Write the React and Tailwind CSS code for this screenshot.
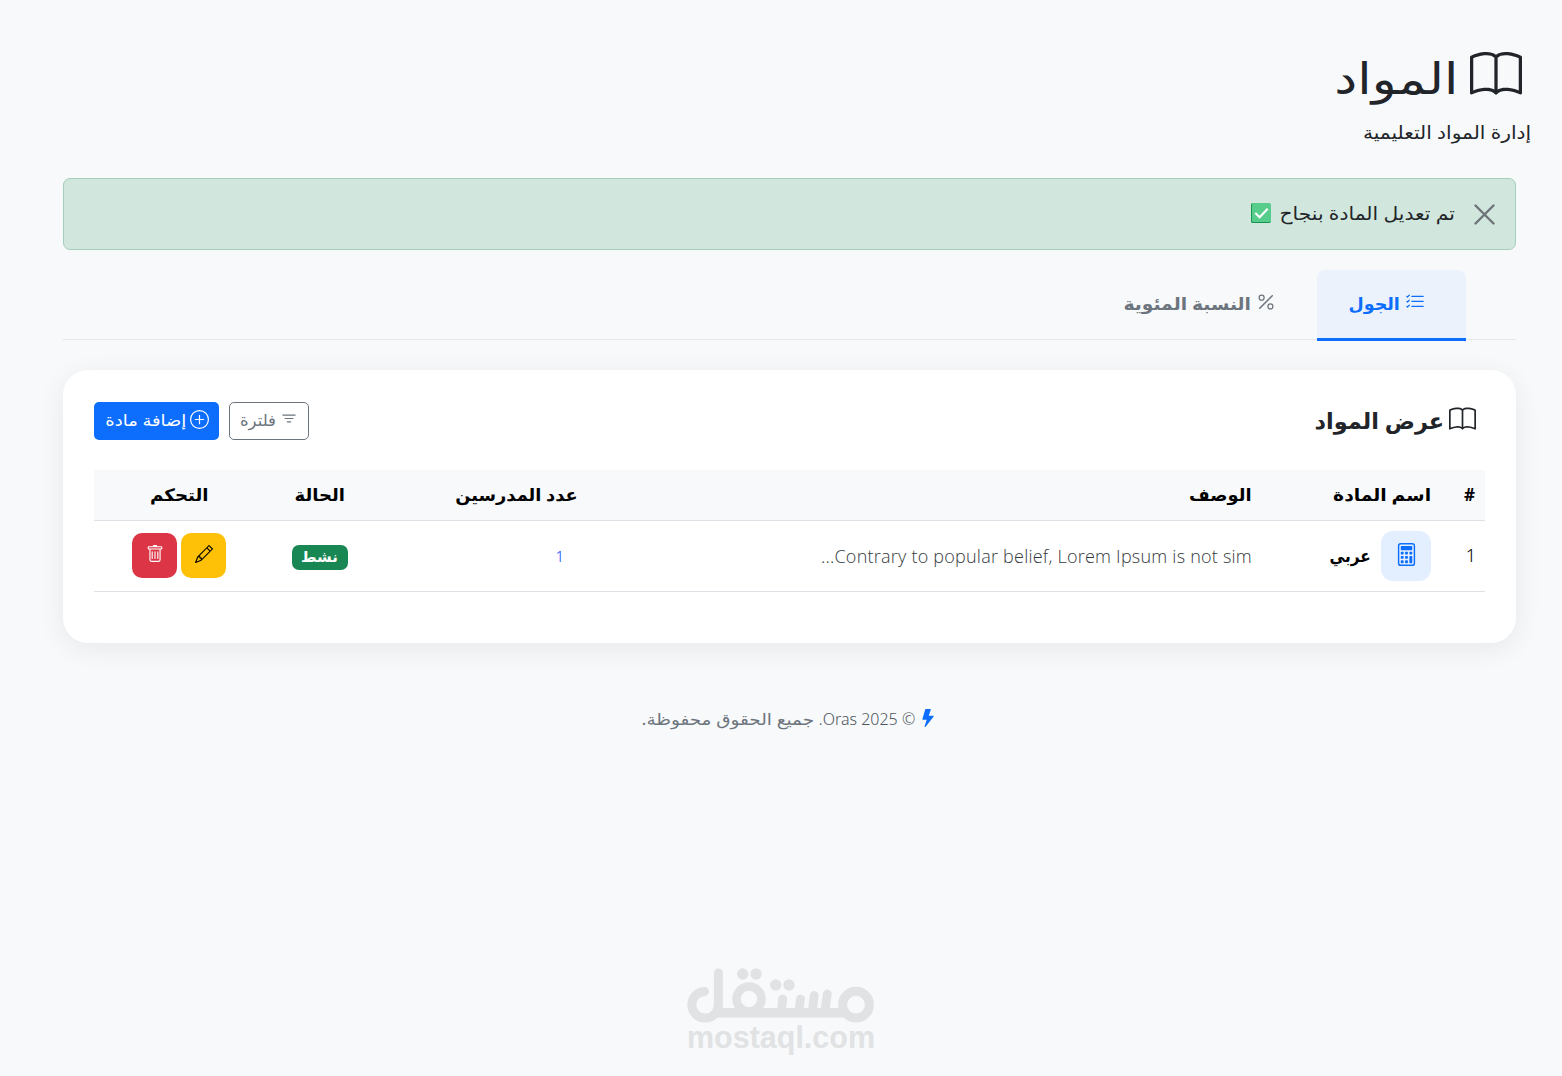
import {
  BsBook,
  BsCalculator,
  BsFilter,
  BsLightningFill,
  BsListCheck,
  BsPencil,
  BsPercent,
  BsPlusCircle,
  BsTrash,
} from "react-icons/bs";

const subjects = [
  {
    id: 1,
    name: "عربي",
    description: "Contrary to popular belief, Lorem Ipsum is not sim...",
    teachers: 1,
    status: "نشط",
  },
];

function PageHeader() {
  return (
    <header className="h-[178px] pt-[49px] pr-[31px]">
      <h1 className="flex h-[64px] items-center gap-[12px] pr-[9px] text-[43px] text-[#212529]">
        <BsBook className="mb-[12px] size-[52px]" />
        <span className="mb-[7px] origin-right scale-x-[1.2] leading-none">المواد</span>
      </h1>
      <p className="mt-[4px] w-fit origin-right scale-x-[1.12] text-[18px] leading-[30px] text-[#212529]">
        إدارة المواد التعليمية
      </p>
    </header>
  );
}

function SuccessAlert() {
  return (
    <div className="flex h-[72px] items-center rounded-[7px] border border-[#a3cfbb] bg-[#d1e7dd] pr-[20px] text-[18px] text-[#212529]">
      <button aria-label="إغلاق">
        <svg viewBox="0 0 21 21" className="size-[21px] text-[#6d7478]" fill="none" stroke="currentColor">
          <path d="M1.500 1.500 19.500 19.500M19.500 1.500 1.500 19.500" strokeWidth="2.400" strokeLinecap="round" />
        </svg>
      </button>
      <span className="mr-[19px] mb-[2px] origin-right scale-x-[1.125]">تم تعديل المادة بنجاح</span>
      <span className="mr-[28px] mb-[2px] flex size-[20px] items-center justify-center rounded-[2px] border-b border-l border-[#159550] bg-[#56cd8b]">
        <svg viewBox="0 0 20 20" className="size-[20px]" fill="none" stroke="white" strokeWidth="2.200">
          <path d="M3.500 10 8 14.500 16.500 5.500" />
        </svg>
      </span>
    </div>
  );
}

function Tabs() {
  return (
    <nav className="mt-[20px] flex h-[70px] border-b border-[#e5e8eb] pr-[50px] text-[17px] font-bold">
      <button className="flex h-[71px] w-[149px] items-center rounded-t-[8px] border-b-3 border-[#0d6efd] bg-[#ecf2fb] pr-[41px] text-[#0d6efd]">
        <BsListCheck className="mb-[4px] size-[20px]" />
        <span className="mr-[5px] origin-right scale-x-[1.03]">الجول</span>
      </button>
      <button className="flex h-[68px] items-center pr-[41px] text-[#6c757d]">
        <BsPercent className="mb-[4px] size-[20px]" />
        <span className="mr-[5px] origin-right scale-x-[1.1] whitespace-nowrap">النسبة المئوية</span>
      </button>
    </nav>
  );
}

function SubjectsTable() {
  return (
    <table className="mt-[30px] w-full table-fixed border-collapse text-[18px] text-black">
      <colgroup>
        <col className="w-[44px]" />
        <col className="w-[179px]" />
        <col />
        <col className="w-[213px]" />
        <col className="w-[111px]" />
        <col className="w-[170px]" />
      </colgroup>
      <thead>
        <tr className="h-[50px] border-b border-[#dee2e6] bg-[#f8f9fa] text-right text-[17px] whitespace-nowrap">
          <th className="pr-[10px]">#</th>
          <th className="pr-[10px]">
            <span className="inline-block origin-right scale-x-[1.1]">اسم المادة</span>
          </th>
          <th className="pr-[10px]">
            <span className="inline-block origin-right scale-x-[1.05]">الوصف</span>
          </th>
          <th className="pr-[10px]">
            <span className="inline-block origin-right scale-x-[1.05]">عدد المدرسين</span>
          </th>
          <th className="text-center">
            <span className="inline-block scale-x-[1.06]">الحالة</span>
          </th>
          <th className="text-center">
            <span className="inline-block scale-x-[1.07]">التحكم</span>
          </th>
        </tr>
      </thead>
      <tbody>
        {subjects.map((subject) => (
          <tr key={subject.id} className="h-[71px] border-b border-[#dee2e6]">
            <td className="pr-[9px] font-light">{subject.id}</td>
            <td className="pr-[10px]">
              <div className="flex items-center">
                <span className="flex size-[50px] items-center justify-center rounded-[12px] bg-[#e3efff] text-[#0d6efd]">
                  <BsCalculator className="mb-[3px] size-[23px]" />
                </span>
                <strong className="mr-[10px] origin-right scale-x-[0.9] text-[17px]">{subject.name}</strong>
              </div>
            </td>
            <td className="pt-[2px] pr-[10px] font-['Open_Sans'] font-light tracking-[0.23px] text-[#343a40]">
              {subject.description}
            </td>
            <td className="pt-[2px] pr-[24px] text-[15px] font-light text-[#0d45fd]">{subject.teachers}</td>
            <td className="text-center">
              <span className="mt-[3px] inline-flex h-[25px] w-[56px] items-center justify-center rounded-[7px] bg-[#198754] pb-[3px] align-middle text-[15px] font-bold text-white">
                {subject.status}
              </span>
            </td>
            <td>
              <div className="flex justify-center gap-[4px]">
                <button className="flex size-[45px] items-center justify-center rounded-[10px] bg-[#ffc107] pb-[3px]">
                  <BsPencil className="size-[18px]" />
                </button>
                <button className="flex size-[45px] items-center justify-center rounded-[10px] bg-[#dc3545] pb-[3px] text-white">
                  <BsTrash className="size-[18px]" />
                </button>
              </div>
            </td>
          </tr>
        ))}
      </tbody>
    </table>
  );
}

function Watermark() {
  return (
    <div className="mx-auto flex w-[188px] flex-col items-center text-[#e1e2e4]">
      <svg viewBox="0 0 188 56" className="h-[56px] w-[188px]" fill="none" stroke="currentColor" strokeLinecap="round">
        <circle cx="169" cy="37.700" r="13.400" strokeWidth="9" />
        <circle cx="62" cy="32" r="12.500" strokeWidth="8.500" />
        <path d="M17.500 24.500A13.300 13.300 0 1 0 31.400 37.700V6" strokeWidth="9" />
        <path d="M28 45.800H160" strokeWidth="9.500" strokeLinecap="butt" />
        <path d="M94.500 43 95.700 32M112 43 113.500 32M125.500 43 127.200 28.500M138 43 140.300 27" strokeWidth="8.800" />
        <g fill="currentColor" stroke="none">
          <circle cx="55.700" cy="7" r="5.700" />
          <circle cx="69" cy="7" r="5.700" />
          <circle cx="88.700" cy="18" r="5.700" />
          <circle cx="102" cy="18" r="5.700" />
        </g>
      </svg>
      <span dir="ltr" className="-mt-px font-['Liberation_Sans'] text-[30.5px] leading-[30px] font-bold">
        mostaql.com
      </span>
    </div>
  );
}

export default function App() {
  return (
    <div
      dir="rtl"
      className="h-[1076px] w-[1562px] overflow-hidden bg-[#f8f9fb] font-['Noto_Sans','DejaVu_Sans',sans-serif]"
    >
      <PageHeader />
      <main className="mr-[46px] ml-[63px]">
        <SuccessAlert />
        <Tabs />
        <section className="mt-[30px] h-[273px] rounded-[25px] bg-white px-[31px] pt-[32px] shadow-[0_6px_28px_rgba(0,0,0,0.07)]">
          <div className="flex h-[38px] items-center">
            <h2 className="flex items-center pr-[9px] text-[22px] font-bold text-[#212529]">
              <BsBook className="mb-[4px] size-[27px]" />
              <span className="mr-[5px] mb-[2px] origin-right scale-x-[1.02]">عرض المواد</span>
            </h2>
            <div className="mr-auto flex gap-[10px] text-[16px] whitespace-nowrap">
              <button className="flex h-[38px] w-[80px] items-center rounded-[5px] border border-[#6c757d] pr-[10px] text-[#6c757d]">
                <BsFilter className="mb-[4px] size-[18px]" />
                <span className="mr-[4px] mb-[2px] origin-right scale-x-[1.03]">فلترة</span>
              </button>
              <button className="flex h-[38px] w-[125px] items-center rounded-[5px] bg-[#0d6efd] pr-[10px] text-white">
                <BsPlusCircle className="mb-[4px] size-[19px]" />
                <span className="mr-[4px] mb-[2px] origin-right scale-x-[1.12]">إضافة مادة</span>
              </button>
            </div>
          </div>
          <SubjectsTable />
        </section>
        <footer className="mt-[63px] flex h-[26px] items-center justify-center text-[16px] text-[#6c757d]">
          <BsLightningFill className="mb-[3px] size-[18px] text-[#0d6efd]" />
          <span className="mr-[4px] flex gap-[5px]">
            <span className="font-light text-[#4d555c]">© 2025 Oras.</span>
            <span className="w-[172px]">
              <span className="inline-block origin-right scale-x-[1.15] whitespace-nowrap">جميع الحقوق محفوظة.</span>
            </span>
          </span>
        </footer>
      </main>
      <div className="mt-[235px]">
        <Watermark />
      </div>
    </div>
  );
}
